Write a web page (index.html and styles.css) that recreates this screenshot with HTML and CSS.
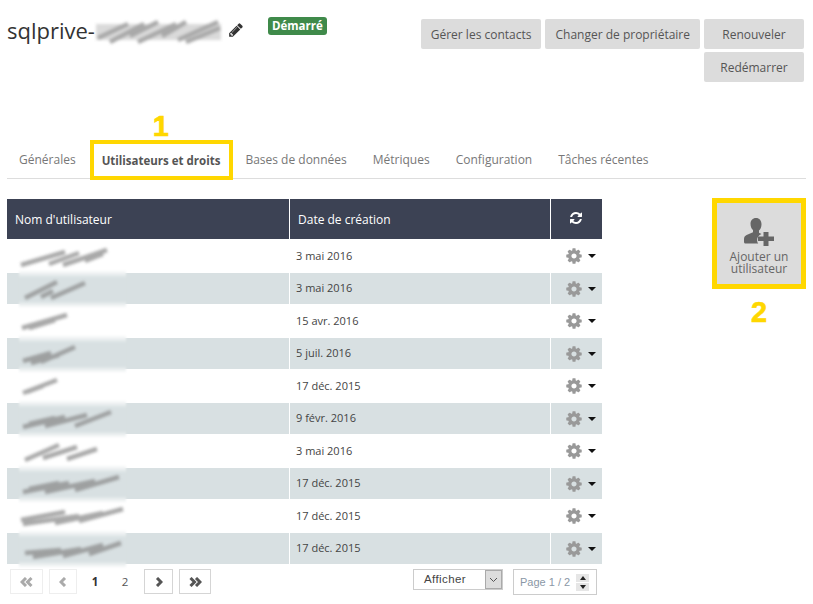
FILE: index.html
```html
<!DOCTYPE html>
<html lang="fr">
	<head>
		<meta charset="utf-8">
		<title>sqlprive</title>
		<link rel="stylesheet" href="styles.css">
	</head>
	<body>
		<svg class="defs" width="0" height="0">
			<symbol id="cog" viewBox="0 0 1792 1792"><path d="M1152 896q0-106-75-181t-181-75-181 75-75 181 75 181 181 75 181-75 75-181zm512-109v222q0 12-8 23t-20 13l-185 28q-19 54-39 91 35 50 107 138 10 12 10 25t-9 23q-27 37-99 108t-94 71q-12 0-26-9l-138-108q-44 23-91 38-16 136-29 186-7 28-36 28h-222q-14 0-24.5-8.5t-11.5-21.5l-28-184q-49-16-90-37l-141 107q-10 9-25 9-14 0-25-11-126-114-165-168-7-10-7-23 0-12 8-23 15-21 51-66.5t54-70.5q-27-50-41-99l-183-27q-13-2-21-12.5t-8-23.5v-222q0-12 8-23t19-13l186-28q14-46 39-92-40-57-107-138-10-12-10-24 0-10 9-23 26-36 98.5-107.5t94.5-71.5q13 0 26 10l138 107q44-23 91-38 16-136 29-186 7-28 36-28h222q14 0 24.5 8.5t11.5 21.5l28 184q49 16 90 37l142-107q9-9 24-9 13 0 25 10 129 119 165 170 7 8 7 22 0 12-8 23-15 21-51 66.5t-54 70.5q26 50 41 98l183 28q13 2 21 12.5t8 23.5z"/></symbol>
		</svg>

		<header class="top">
			<div class="title">
				<h1>sqlprive-</h1>
				<svg class="streaks title-streaks" width="129" height="28" viewBox="0 0 129 28"><path class="band" d="M2 8H127V24H2z"/><path d="M4 22L34 8M16 26L50 8M36 20L64 6M44 26L82 8M68 20L92 6M84 24L124 6M92 26L126 12"/></svg>
				<svg class="pencil" width="16" height="16" viewBox="0 0 1792 1792"><path d="M491 1536l91-91-235-235-91 91v107h128v128h107zm523-928q0-22-22-22-10 0-17 7l-542 542q-7 7-7 17 0 22 22 22 10 0 17-7l542-542q7-7 7-17zm-54-192l416 416-832 832h-416v-416zm683 96q0 53-37 90l-166 166-416-416 166-165q36-38 90-38 53 0 91 38l235 234q37 39 37 91z"/></svg>
				<span class="badge">Démarré</span>
			</div>
			<div class="actions">
				<button class="btn">Gérer les contacts</button>
				<button class="btn">Changer de propriétaire</button>
				<button class="btn btn-wide">Renouveler</button>
				<button class="btn btn-wide">Redémarrer</button>
			</div>
		</header>

		<nav class="tabs">
			<a>Générales</a>
			<a class="active">Utilisateurs et droits<span class="mark mark-1">1</span></a>
			<a>Bases de données</a>
			<a>Métriques</a>
			<a>Configuration</a>
			<a>Tâches récentes</a>
		</nav>

		<main class="content">
			<div class="list">
				<table class="users">
					<thead>
						<tr>
							<th class="c-name">Nom d'utilisateur</th>
							<th class="c-date">Date de création</th>
							<th class="c-act">
								<svg class="refresh" width="14" height="14" viewBox="0 0 1792 1792"><path d="M1511 928q0 5-1 7-64 268-268 434.5t-478 166.5q-146 0-282.5-55t-243.5-157l-129 129q-19 19-45 19t-45-19-19-45v-448q0-26 19-45t45-19h448q26 0 45 19t19 45-19 45l-137 137q71 66 161 102t187 36q134 0 250-65t186-179q11-17 53-117 8-23 30-23h192q13 0 22.5 9.5t9.5 22.5zm25-800v448q0 26-19 45t-45 19h-448q-26 0-45-19t-19-45 19-45l138-138q-148-137-349-137-134 0-250 65t-186 179q-11 17-53 117-8 23-30 23h-199q-13 0-22.5-9.5t-9.5-22.5v-7q65-268 270-434.5t480-166.5q146 0 284 55.5t245 156.5l130-129q19-19 45-19t45 19 19 45z"/></svg>
							</th>
						</tr>
					</thead>
					<tbody>
						<tr>
							<td class="c-name"><svg class="streaks" width="107" height="30" viewBox="0 0 107 30"><path d="M2 24L46 11M30 23L60 12M44 24L88 9M66 20L84 13"/></svg></td>
							<td class="c-date">3 mai 2016</td>
							<td class="c-act"><svg class="cog"><use href="#cog"/></svg><span class="caret"></span></td>
						</tr>
						<tr>
							<td class="c-name"><span class="haze"></span><svg class="streaks" width="107" height="30" viewBox="0 0 107 30"><path d="M6 24L38 8M22 23L34 17M32 24L66 9"/></svg></td>
							<td class="c-date">3 mai 2016</td>
							<td class="c-act"><svg class="cog"><use href="#cog"/></svg><span class="caret"></span></td>
						</tr>
						<tr>
							<td class="c-name"><svg class="streaks" width="107" height="30" viewBox="0 0 107 30"><path d="M3 22L48 9M10 22L36 14"/></svg></td>
							<td class="c-date">15 avr. 2016</td>
							<td class="c-act"><svg class="cog"><use href="#cog"/></svg><span class="caret"></span></td>
						</tr>
						<tr>
							<td class="c-name"><span class="haze"></span><svg class="streaks" width="107" height="30" viewBox="0 0 107 30"><path d="M4 22L32 14M22 23L56 8M12 24L40 16"/></svg></td>
							<td class="c-date">5 juil. 2016</td>
							<td class="c-act"><svg class="cog"><use href="#cog"/></svg><span class="caret"></span></td>
						</tr>
						<tr>
							<td class="c-name"><svg class="streaks" width="107" height="30" viewBox="0 0 107 30"><path d="M4 22L38 9M8 21L24 15"/></svg></td>
							<td class="c-date">17 déc. 2015</td>
							<td class="c-act"><svg class="cog"><use href="#cog"/></svg><span class="caret"></span></td>
						</tr>
						<tr>
							<td class="c-name"><span class="haze"></span><svg class="streaks" width="107" height="30" viewBox="0 0 107 30"><path d="M4 23L46 13M26 22L68 11M56 22L92 8M10 20L36 14"/></svg></td>
							<td class="c-date">9 févr. 2016</td>
							<td class="c-act"><svg class="cog"><use href="#cog"/></svg><span class="caret"></span></td>
						</tr>
						<tr>
							<td class="c-name"><svg class="streaks" width="107" height="30" viewBox="0 0 107 30"><path d="M6 24L40 9M24 22L58 11M48 23L78 13"/></svg></td>
							<td class="c-date">3 mai 2016</td>
							<td class="c-act"><svg class="cog"><use href="#cog"/></svg><span class="caret"></span></td>
						</tr>
						<tr>
							<td class="c-name"><span class="haze"></span><svg class="streaks" width="107" height="30" viewBox="0 0 107 30"><path d="M4 23L50 14M26 23L76 12M56 21L100 8M10 20L40 14"/></svg></td>
							<td class="c-date">17 déc. 2015</td>
							<td class="c-act"><svg class="cog"><use href="#cog"/></svg><span class="caret"></span></td>
						</tr>
						<tr>
							<td class="c-name"><svg class="streaks" width="107" height="30" viewBox="0 0 107 30"><path d="M2 19L46 11M4 23L60 15M36 22L84 12M60 20L104 8"/></svg></td>
							<td class="c-date">17 déc. 2015</td>
							<td class="c-act"><svg class="cog"><use href="#cog"/></svg><span class="caret"></span></td>
						</tr>
						<tr>
							<td class="c-name"><span class="haze"></span><svg class="streaks" width="107" height="30" viewBox="0 0 107 30"><path d="M6 19L42 16M14 23L62 15M44 22L84 11M70 20L102 9"/></svg></td>
							<td class="c-date">17 déc. 2015</td>
							<td class="c-act"><svg class="cog"><use href="#cog"/></svg><span class="caret"></span></td>
						</tr>
					</tbody>
				</table>

				<div class="pager">
					<div class="pages">
						<a class="pg pg-first off"><svg width="13" height="10" viewBox="0 0 13 10"><path d="M6 1L2 5l4 4M11.500 1L7.500 5l4 4"/></svg></a>
						<a class="pg pg-prev off"><svg width="8" height="10" viewBox="0 0 8 10"><path d="M6 1L2 5l4 4"/></svg></a>
						<span class="num cur">1</span>
						<span class="num">2</span>
						<a class="pg pg-next"><svg width="8" height="10" viewBox="0 0 8 10"><path d="M2 1l4 4-4 4"/></svg></a>
						<a class="pg pg-last"><svg width="13" height="10" viewBox="0 0 13 10"><path d="M1.500 1l4 4-4 4M7 1l4 4-4 4"/></svg></a>
					</div>
					<div class="show">
						<span>Afficher</span>
						<span class="show-arrow"><svg width="9" height="6" viewBox="0 0 9 6"><path d="M1 1l3.500 3.500L8 1"/></svg></span>
					</div>
					<div class="page-box">
						<span>Page 1 / 2</span>
						<span class="spin"><i class="up"></i><i class="down"></i></span>
					</div>
				</div>
			</div>

			<aside class="side">
				<button class="add">
					<svg class="add-icon" width="32" height="32" viewBox="0 0 32 32">
						<path d="M13 1c3.400 0 5.500 2.700 5.500 6.300 0 2.700-1 5-2.500 6.300v2.100l2.500 1.300c-2.700 1-4.400 3.400-4.400 6 0 1.300.4 2.600 1.100 3.500H2.500c-.9 0-1.500-.6-1.500-1.500v-3c0-2 1-3.300 2.600-4l6.400-2.800v-2.100c-1.500-1.300-2.500-3.600-2.500-6.300C7.500 3.700 9.600 1 13 1z"/>
						<path d="M20.500 15h5v4.500H31V24h-5.500v5h-5v-5H15v-4.500h5.500z"/>
					</svg>
					<span>Ajouter un utilisateur</span>
				</button>
				<span class="mark mark-2">2</span>
			</aside>
		</main>
	</body>
</html>
```

FILE: styles.css
```css
body
{
	margin: 0;
	padding: 0 7px;
	background-color: #fff;
	font-family: "Open Sans", sans-serif;
	color: #555;
}
.defs
{
	position: absolute;
}
.top
{
	display: flex;
	justify-content: space-between;
	align-items: flex-start;
	height: 140px;
}
.title
{
	display: flex;
	align-items: flex-start;
}
h1
{
	margin: 14px 0 0;
	font-size: 22px;
	line-height: 32px;
	font-weight: 400;
	color: #333;
}
.streaks
{
	fill: none;
	stroke: #888;
	stroke-width: 4.5;
	filter: blur(1.8px);
	opacity: .72;
}
.streaks .band
{
	fill: #ccc;
	stroke: none;
}
.title-streaks
{
	margin: 16px 0 0 -1px;
}
.pencil
{
	margin: 22px 0 0 5px;
	fill: #333;
}
.badge
{
	margin: 17px 0 0 24px;
	padding: 0 4px;
	height: 18px;
	line-height: 18px;
	border-radius: 3px;
	background-color: #3f8a4a;
	color: #fff;
	font-size: 11.5px;
	font-weight: 700;
}
.actions
{
	display: flex;
	flex-wrap: wrap;
	justify-content: flex-end;
	align-content: flex-start;
	gap: 3px 4px;
	width: 385px;
	margin: 19px 2px 0 0;
}
.btn
{
	height: 30px;
	padding: 0 10px;
	border: 0;
	border-radius: 2px;
	background-color: #dcdcdc;
	color: #555;
	font-family: inherit;
	font-size: 12px;
}
.btn-wide
{
	width: 100px;
}
.tabs
{
	display: flex;
	gap: 26px;
	height: 38px;
	padding-left: 12px;
	border-bottom: 1px solid #ddd;
	font-size: 12px;
	line-height: 39px;
	color: #777;
}
.tabs a
{
	position: relative;
}
.tabs .active
{
	margin-right: -1px;
	font-size: 11.5px;
	font-weight: 700;
	line-height: 41px;
	color: #555;
}
.tabs .active::after
{
	content: "";
	position: absolute;
	top: 0;
	bottom: -2px;
	left: -12px;
	right: -13px;
	border: 4.5px solid #ffd700;
}
.mark
{
	font-family: "Liberation Sans", sans-serif;
	font-weight: 700;
	font-size: 29px;
	line-height: 29px;
	color: #ffd700;
	-webkit-text-stroke: .6px #ffd700;
}
.mark-1
{
	position: absolute;
	top: -28px;
	left: 51px;
}
.content
{
	display: flex;
	align-items: flex-start;
	margin-top: 20px;
}
.list
{
	width: 595px;
}
.users
{
	width: 595px;
	table-layout: fixed;
	border-collapse: separate;
	border-spacing: 0;
}
.users th
{
	height: 40px;
	padding: 0;
	background-color: #3c4254;
	color: #fff;
	font-size: 12px;
	font-weight: 400;
	text-align: left;
}
.users td
{
	padding: 0;
	font-size: 11px;
	color: #444;
}
.users tbody tr:nth-child(odd) td
{
	height: 34px;
}
.users tbody tr:nth-child(even) td
{
	height: 31px;
	background-color: #d8e0e2;
}
.users th.c-name
{
	width: 282px;
	padding-left: 8px;
	box-sizing: border-box;
}
.users .c-date
{
	width: 261px;
	box-sizing: border-box;
	padding-left: 6px;
	border-left: 1px solid #fff;
}
.users td.c-date
{
	padding-bottom: 2px;
}
.users th.c-date
{
	padding-left: 8px;
}
.users .c-act
{
	box-sizing: border-box;
	border-left: 1px solid #fff;
	text-align: center;
}
.users td.c-act
{
	padding-left: 8px;
}
.users td.c-name
{
	position: relative;
}
.users td .streaks
{
	position: absolute;
	top: 50%;
	left: 12px;
	margin-top: -15px;
}
.haze
{
	position: absolute;
	top: -3px;
	bottom: -4px;
	left: 12px;
	width: 107px;
	background: linear-gradient(to bottom, #fff, #d8e0e2 8px, #d8e0e2 calc(100% - 7px), #fff);
	filter: blur(.8px);
}
.refresh
{
	display: block;
	margin: 0 auto;
	fill: #fff;
}
.cog
{
	width: 18px;
	height: 18px;
	fill: #999;
	vertical-align: middle;
}
.caret
{
	display: inline-block;
	margin-left: 5px;
	border-top: 4px solid #111;
	border-left: 4px solid transparent;
	border-right: 4px solid transparent;
	vertical-align: middle;
}
.pager
{
	display: flex;
	align-items: flex-start;
	margin-top: 5px;
	padding-left: 3px;
}
.pages
{
	display: flex;
	align-items: center;
	width: 403px;
}
.pg
{
	display: flex;
	align-items: center;
	justify-content: center;
	box-sizing: border-box;
	height: 25px;
	border: 1px solid #d5d5d5;
	background-color: #fff;
}
.pg.off
{
	border-color: #eee;
}
.pg svg
{
	fill: none;
	stroke: #555;
	stroke-width: 3;
}
.pg.off svg
{
	stroke: #aaa;
}
.pg-first
{
	width: 33px;
	margin-right: 6px;
}
.pg-prev
{
	width: 28px;
}
.pg-next
{
	width: 29px;
	margin-right: 6px;
}
.pg-last
{
	width: 32px;
}
.num
{
	width: 33px;
	padding-right: 5px;
	box-sizing: border-box;
	font-size: 11.5px;
	text-align: center;
	color: #555;
}
.cur
{
	width: 34px;
	padding: 0 0 0 2px;
	font-weight: 700;
	color: #333;
}
.show
{
	display: flex;
	align-items: center;
	justify-content: space-between;
	box-sizing: border-box;
	width: 90px;
	height: 21px;
	padding: 0 0 2px 10px;
	border: 1px solid #ccc;
	font-family: "Liberation Sans", sans-serif;
	font-size: 11.5px;
	letter-spacing: .4px;
	color: #444;
}
.show-arrow
{
	display: flex;
	align-items: center;
	justify-content: center;
	width: 17px;
	height: 19px;
	margin-bottom: -2px;
	background-color: #ddd;
	border: 1px solid #aaa;
	box-sizing: border-box;
}
.show-arrow svg
{
	fill: none;
	stroke: #555;
}
.page-box
{
	display: flex;
	align-items: center;
	gap: 6px;
	box-sizing: border-box;
	width: 84px;
	height: 26px;
	margin-left: 10px;
	padding-left: 6px;
	border: 1px solid #ccc;
	font-family: "Liberation Sans", sans-serif;
	font-size: 11px;
	color: #8a97a6;
}
.spin
{
	display: flex;
	flex-direction: column;
	gap: 1px;
	width: 13px;
	background-color: #fff;
}
.spin i
{
	display: flex;
	align-items: center;
	justify-content: center;
	height: 8px;
	background-color: #e6e6e6;
}
.spin i::before
{
	content: "";
	border-left: 3px solid transparent;
	border-right: 3px solid transparent;
}
.spin .up::before
{
	border-bottom: 4px solid #222;
}
.spin .down::before
{
	border-top: 4px solid #222;
}
.side
{
	display: flex;
	flex-direction: column;
	align-items: center;
	width: 94px;
	margin: -1px 0 0 110px;
}
.add
{
	display: flex;
	flex-direction: column;
	align-items: center;
	box-sizing: border-box;
	width: 94px;
	height: 91px;
	padding: 14px 8px 0;
	border: 5px solid #ffd700;
	background-color: #dcdcdc;
	color: #666;
	font-family: inherit;
	font-size: 12px;
	line-height: 12px;
}
.add-icon
{
	margin-bottom: 2px;
	fill: #666;
}
.mark-2
{
	margin-top: 9px;
}
```
